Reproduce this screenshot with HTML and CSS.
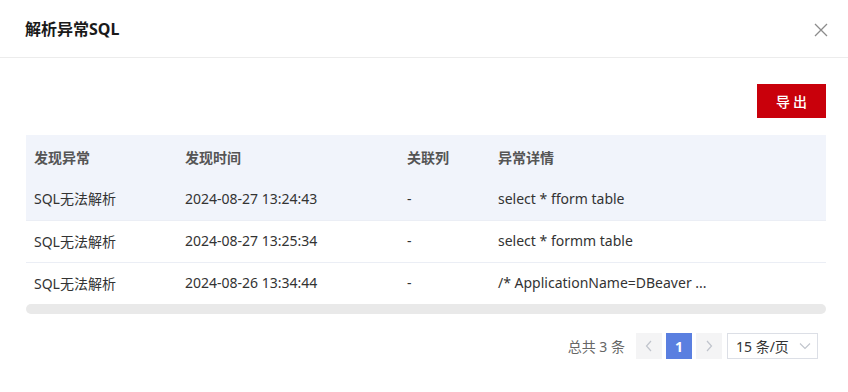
FILE: index.html
```html
<!DOCTYPE html>
<html lang="zh-CN">
  <head>
    <meta charset="UTF-8" />
    <title>解析异常SQL</title>
    <link rel="stylesheet" href="styles.css">
  </head>
  <body>
    <div class="dialog">
      <div class="dialogHeader">
        <h2 class="title">解析异常SQL</h2>
        <button class="closeBtn">
          <svg width="14" height="14" viewBox="0 0 14 14">
            <path d="M1 1L13 13M13 1L1 13" stroke="#8c8c8c" stroke-width="1.3" fill="none" />
          </svg>
        </button>
      </div>
      <div class="dialogBody">
        <div class="toolbar">
          <button class="exportBtn">导出</button>
        </div>
        <table class="grid">
          <thead>
            <tr>
              <th class="c1">发现异常</th>
              <th class="c2">发现时间</th>
              <th class="c3">关联列</th>
              <th class="c4">异常详情</th>
            </tr>
          </thead>
          <tbody>
            <tr class="hover">
              <td>SQL无法解析</td>
              <td>2024-08-27 13:24:43</td>
              <td>-</td>
              <td>select * fform table</td>
            </tr>
            <tr>
              <td>SQL无法解析</td>
              <td>2024-08-27 13:25:34</td>
              <td>-</td>
              <td>select * formm table</td>
            </tr>
            <tr>
              <td>SQL无法解析</td>
              <td>2024-08-26 13:34:44</td>
              <td>-</td>
              <td>/* ApplicationName=DBeaver ...</td>
            </tr>
          </tbody>
        </table>
        <div class="scrollbar"></div>
        <div class="pager">
          <span class="total">总共 3 条</span>
          <button class="pageBtn arrow">
            <svg width="8" height="12" viewBox="0 0 8 12">
              <path d="M6 1L1.5 6L6 11" stroke="#c0c4cc" stroke-width="1.2" fill="none" />
            </svg>
          </button>
          <button class="pageBtn active">1</button>
          <button class="pageBtn arrow">
            <svg width="8" height="12" viewBox="0 0 8 12">
              <path d="M2 1L6.5 6L2 11" stroke="#c0c4cc" stroke-width="1.2" fill="none" />
            </svg>
          </button>
          <div class="sizeSelect">
            <span>15 条/页</span>
            <svg width="12" height="8" viewBox="0 0 12 8">
              <path d="M1 1.5L6 6.5L11 1.5" stroke="#c0c4cc" stroke-width="1.1" fill="none" />
            </svg>
          </div>
        </div>
      </div>
    </div>
  </body>
</html>
```

FILE: styles.css
```css
* {
  margin: 0;
  padding: 0;
  box-sizing: border-box;
  font-family: "Noto Sans", "Noto Sans CJK SC", sans-serif;
}
body {
  background-color: #fff;
  width: 848px;
  height: 392px;
  overflow: hidden;
}
.dialog {
  width: 848px;
}
.dialogHeader {
  height: 58px;
  display: flex;
  justify-content: space-between;
  align-items: center;
  padding: 0 20px 0 25px;
  border-bottom: 1px solid #ececec;
}
.title {
  font-size: 16px;
  font-weight: 700;
  color: #1a1a1a;
  line-height: 22px;
}
.closeBtn {
  background: none;
  border: none;
  width: 14px;
  height: 14px;
  display: flex;
  margin-top: 2px;
}
.dialogBody {
  padding: 26px 22px 0 26px;
}
.toolbar {
  display: flex;
  justify-content: flex-end;
  margin-bottom: 17px;
}
.exportBtn {
  width: 69px;
  height: 34px;
  background-color: #c9000b;
  border: none;
  color: #fff;
  font-size: 14px;
  font-weight: 500;
  letter-spacing: 3px;
  padding-left: 3px;
  font-family: "Noto Sans CJK SC", sans-serif;
}
.grid {
  width: 800px;
  border-collapse: collapse;
  table-layout: fixed;
  font-size: 14px;
}
.grid th {
  height: 43px;
  background-color: #f1f4fb;
  color: #555;
  font-weight: 700;
  text-align: left;
  padding: 0 8px;
}
.grid td {
  height: 42px;
  color: #333;
  padding: 0 8px 1px;
  border-bottom: 1px solid #ebeef5;
  white-space: nowrap;
}
.grid tbody tr:last-child td {
  border-bottom: none;
}
.grid tr.hover td {
  background-color: #f1f4fb;
}
.c1 { width: 151px; }
.c2 { width: 222px; }
.c3 { width: 91px; }
.scrollbar {
  width: 800px;
  height: 10px;
  border-radius: 5px;
  background-color: #e9e9e9;
}
.pager {
  display: flex;
  justify-content: flex-end;
  align-items: center;
  margin-top: 19px;
  padding-right: 8px;
  font-size: 14px;
}
.total {
  color: #666;
  margin-right: 11px;
}
.pageBtn {
  width: 26px;
  height: 26px;
  border: none;
  background-color: #f4f4f5;
  display: flex;
  align-items: center;
  justify-content: center;
  margin-right: 4px;
  font-size: 14px;
  font-weight: 700;
}
.pageBtn.active {
  background-color: #5a7fe0;
  color: #fff;
}
.sizeSelect {
  width: 91px;
  height: 26px;
  border: 1px solid #dcdfe6;
  display: flex;
  align-items: center;
  justify-content: space-between;
  padding: 0 6px 0 8px;
  color: #333;
  margin-left: 1px;
}
```
